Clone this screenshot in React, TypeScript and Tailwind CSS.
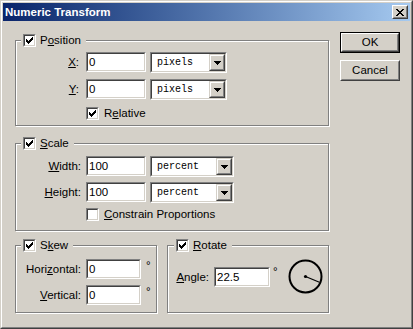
import React from "react";

const FONT = { fontFamily: '"Liberation Sans", Arial, sans-serif' };

function Check({ checked }: { checked: boolean }) {
  const ys = [2, 3, 4, 3, 2, 1, 0];
  return (
    <span className="flex h-[13px] w-[13px] shrink-0 border border-t-[#808080] border-l-[#808080] border-b-white border-r-white">
      <span className="flex h-[11px] w-[11px] items-center justify-center border border-t-[#404040] border-l-[#404040] border-b-[#d4d0c8] border-r-[#d4d0c8] bg-white">
        {checked && (
          <svg width="7" height="7" viewBox="0 0 7 7" shapeRendering="crispEdges">
            {ys.map((y, i) => (
              <rect key={i} x={i} y={y} width="1" height="3" fill="#000" />
            ))}
          </svg>
        )}
      </span>
    </span>
  );
}

function Sunken({ className, children }: { className: string; children?: React.ReactNode }) {
  return (
    <div className={`shrink-0 border border-t-[#808080] border-l-[#808080] border-b-white border-r-white ${className}`}>
      <div className="flex h-full w-full border border-t-[#404040] border-l-[#404040] border-b-[#d4d0c8] border-r-[#d4d0c8] bg-white">
        {children}
      </div>
    </div>
  );
}

function Field({ className, value }: { className: string; value: string }) {
  return (
    <Sunken className={`h-[20px] ${className}`}>
      <span className="pl-[1px] text-[11.5px] leading-[16px] text-black">{value}</span>
    </Sunken>
  );
}

function Select({ className, value }: { className: string; value: string }) {
  return (
    <Sunken className={`h-[21px] ${className}`}>
      <span
        className="flex-1 pl-[5px] text-[10px] leading-[17px] text-black"
        style={{ fontFamily: '"Liberation Mono", "Courier New", monospace' }}
      >
        {value}
      </span>
      <span className="flex h-[17px] w-[16px] border border-t-[#d4d0c8] border-l-[#d4d0c8] border-b-[#404040] border-r-[#404040]">
        <span className="flex h-full w-full items-center justify-center border border-t-white border-l-white border-b-[#808080] border-r-[#808080] bg-[#d4d0c8]">
          <svg width="7" height="4" viewBox="0 0 7 4" shapeRendering="crispEdges">
            <path d="M0 0h7v1h-1v1h-1v1h-1v1h-1v-1h-1v-1h-1v-1h-1z" fill="#000" />
          </svg>
        </span>
      </span>
    </Sunken>
  );
}

function Header({ label, ml }: { label: React.ReactNode; ml: string }) {
  return (
    <div className={`-mt-[7px] flex h-[13px] w-fit items-center bg-[#d4d0c8] pl-[2px] pr-[5px] ${ml}`}>
      <Check checked />
      <span className="ml-[4px] text-[11.5px] leading-[13px]">{label}</span>
    </div>
  );
}

const groupCls =
  "border border-[#808080] shadow-[inset_1px_1px_0_#fff,1px_1px_0_#fff] flex flex-col";

function RaisedButton({ children, def }: { children: React.ReactNode; def?: boolean }) {
  const inner = (
    <div className="flex h-full w-full border border-t-white border-l-white border-b-[#404040] border-r-[#404040]">
      <div className="flex h-full w-full items-center justify-center border border-t-[#d4d0c8] border-l-[#d4d0c8] border-b-[#808080] border-r-[#808080] bg-[#d4d0c8] text-[11.5px] leading-[13px]">
        {children}
      </div>
    </div>
  );
  if (def) {
    return <div className="h-[21px] w-[60px] border border-black">{inner}</div>;
  }
  return <div className="h-[21px] w-[60px]">{inner}</div>;
}

export default function App() {
  return (
    <div
      className="h-[329px] w-[413px] border border-t-[#d4d0c8] border-l-[#d4d0c8] border-b-[#404040] border-r-[#404040] bg-[#d4d0c8] text-black"
      style={FONT}
    >
      <div className="flex h-full w-full flex-col border border-t-white border-l-white border-b-[#808080] border-r-[#808080] p-[1px]">
        {/* Title bar */}
        <div className="flex h-[18px] shrink-0 items-center bg-linear-to-r from-[#0a246a] to-[#a6caf0]">
          <span className="pl-[2px] text-[11.5px] font-bold leading-[14px] text-white">Numeric Transform</span>
          <div className="ml-auto mr-[2px] h-[14px] w-[16px] border border-t-white border-l-white border-b-[#404040] border-r-[#404040]">
            <div className="flex h-full w-full items-center justify-center border border-t-[#d4d0c8] border-l-[#d4d0c8] border-b-[#808080] border-r-[#808080] bg-[#d4d0c8]">
              <svg width="8" height="7" viewBox="0 0 8 7" shapeRendering="crispEdges">
                <path d="M0 0h2v1h1v1h2v-1h1v-1h2v1h-1v1h-1v1h-1v1h1v1h1v1h1v1h-2v-1h-1v-1h-2v1h-1v1h-2v-1h1v-1h1v-1h1v-1h-1v-1h-1v-1h-1z" fill="#000" />
              </svg>
            </div>
          </div>
        </div>

        {/* Body */}
        <div className="flex pl-[12px] pt-[11px]">
          <div className="flex w-[314px] flex-col pt-[8px]">
            {/* Position */}
            <div className={`${groupCls} h-[86px]`}>
              <Header ml="ml-[5px]" label={<>P<u>o</u>sition</>} />
              <div className="mt-[5px] flex h-[21px] items-start">
                <span className="w-[70px] pr-[7px] text-right text-[11.5px] leading-[20px]"><u>X</u>:</span>
                <Field className="w-[60px]" value="0" />
                <Select className="ml-[4px] w-[77px]" value="pixels" />
              </div>
              <div className="mt-[6px] flex h-[21px] items-start">
                <span className="w-[70px] pr-[7px] text-right text-[11.5px] leading-[20px]"><u>Y</u>:</span>
                <Field className="w-[60px]" value="0" />
                <Select className="ml-[4px] w-[77px]" value="pixels" />
              </div>
              <div className="ml-[70px] mt-[7px] flex h-[13px] items-center">
                <Check checked />
                <span className="ml-[5px] text-[11.5px] leading-[13px]">R<u>e</u>lative</span>
              </div>
            </div>

            {/* Scale */}
            <div className={`${groupCls} mt-[17px] h-[88px]`}>
              <Header ml="ml-[5px]" label={<><u>S</u>cale</>} />
              <div className="mt-[6px] flex h-[21px] items-start">
                <span className="w-[70px] pr-[5px] text-right text-[11.5px] leading-[20px]"><u>W</u>idth:</span>
                <Field className="w-[60px]" value="100" />
                <Select className="ml-[4px] w-[84px]" value="percent" />
              </div>
              <div className="mt-[5px] flex h-[21px] items-start">
                <span className="w-[70px] pr-[5px] text-right text-[11.5px] leading-[20px]"><u>H</u>eight:</span>
                <Field className="w-[60px]" value="100" />
                <Select className="ml-[4px] w-[84px]" value="percent" />
              </div>
              <div className="ml-[70px] mt-[5px] flex h-[13px] items-center">
                <Check checked={false} />
                <span className="ml-[5px] text-[11.5px] leading-[13px]"><u>C</u>onstrain Proportions</span>
              </div>
            </div>

            {/* Skew + Rotate */}
            <div className="mt-[14px] flex">
              <div className={`${groupCls} h-[68px] w-[142px]`}>
                <Header ml="ml-[5px]" label={<>S<u>k</u>ew</>} />
                <div className="mt-[7px] flex h-[20px] items-start">
                  <span className="w-[70px] pr-[5px] text-right text-[11.5px] leading-[20px]">Hori<u>z</u>ontal:</span>
                  <Field className="w-[55px]" value="0" />
                  <span className="ml-[5px] text-[11.5px] leading-[13px]">°</span>
                </div>
                <div className="mt-[6px] flex h-[20px] items-start">
                  <span className="w-[70px] pr-[5px] text-right text-[11.5px] leading-[20px]"><u>V</u>ertical:</span>
                  <Field className="w-[55px]" value="0" />
                  <span className="ml-[5px] text-[11.5px] leading-[13px]">°</span>
                </div>
              </div>

              <div className={`${groupCls} ml-[10px] h-[68px] w-[162px]`}>
                <Header ml="ml-[6px]" label={<><u>R</u>otate</>} />
                <div className="mt-[7px] flex h-[35px] items-center">
                  <span className="w-[46px] pr-[5px] text-right text-[11.5px] leading-[20px]"><u>A</u>ngle:</span>
                  <Field className="w-[56px]" value="22.5" />
                  <span className="ml-[3px] mt-[6px] self-start text-[11.5px] leading-[13px]">°</span>
                  <svg className="ml-[10px]" width="36" height="36" viewBox="0 0 36 36">
                    <circle cx="17.5" cy="17.5" r="16" fill="none" stroke="#000" strokeWidth="2" />
                    <line x1="17.5" y1="17.5" x2="31.4" y2="23.2" stroke="#000" strokeWidth="1.2" />
                    <circle cx="17.5" cy="17.5" r="1.6" fill="#000" />
                  </svg>
                </div>
              </div>
            </div>
          </div>

          {/* Buttons */}
          <div className="ml-[11px] flex flex-col">
            <RaisedButton def>OK</RaisedButton>
            <div className="mt-[7px]">
              <RaisedButton>Cancel</RaisedButton>
            </div>
          </div>
        </div>
      </div>
    </div>
  );
}
